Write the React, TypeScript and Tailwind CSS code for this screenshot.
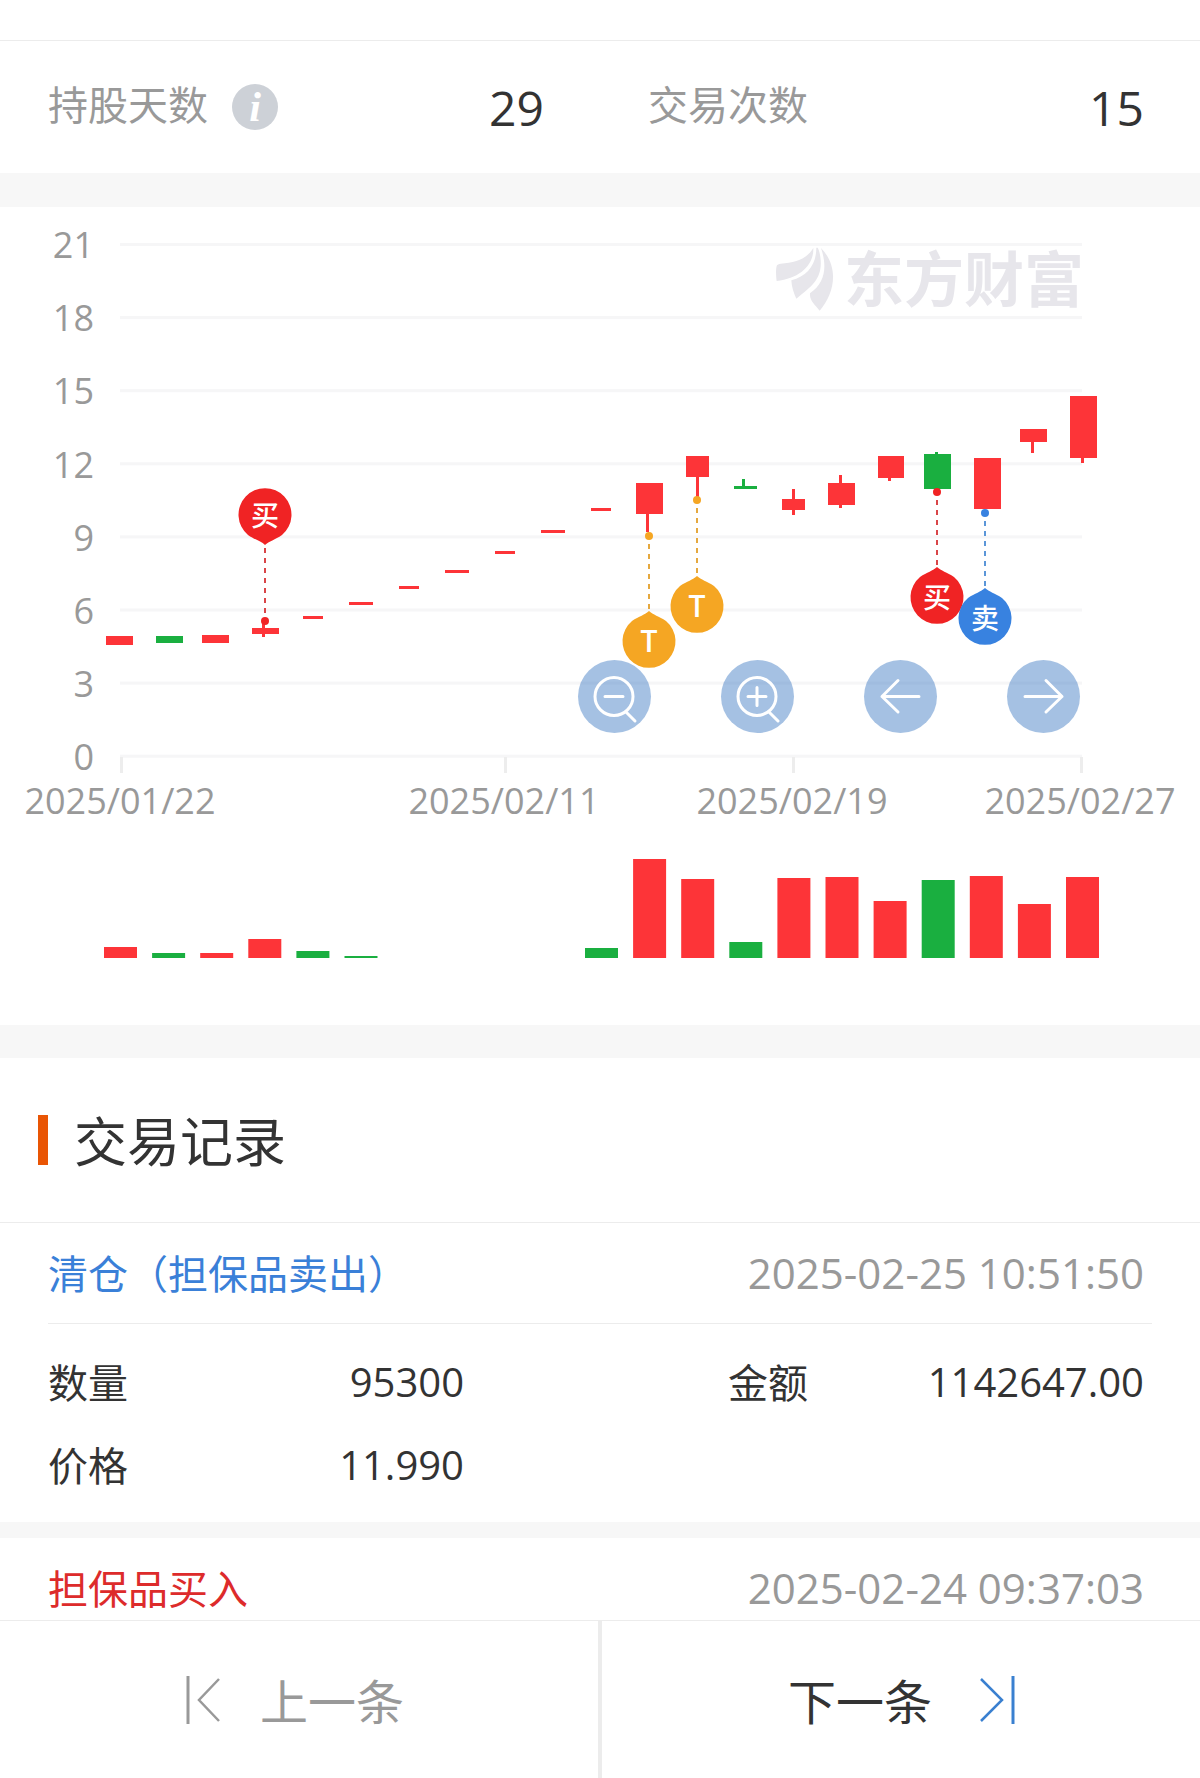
import type { ReactNode } from 'react';

const RED = '#fd3438';
const GREEN = '#1aaf40';

type Candle = {
  x: number;
  w: number;
  top: number;
  bottom: number;
  color?: string;
  wick?: [number, number, number];
};

const candles: Candle[] = [
  { x: 106, w: 27, top: 636, bottom: 645 },
  { x: 156, w: 27, top: 636, bottom: 643, color: GREEN },
  { x: 202, w: 27, top: 635, bottom: 643 },
  { x: 252, w: 27, top: 628, bottom: 634, wick: [263, 623, 637] },
  { x: 303, w: 20, top: 616, bottom: 619 },
  { x: 349, w: 24, top: 602, bottom: 605 },
  { x: 399, w: 20, top: 586, bottom: 589 },
  { x: 445, w: 24, top: 570, bottom: 573 },
  { x: 495, w: 20, top: 551, bottom: 554 },
  { x: 541, w: 24, top: 530, bottom: 533 },
  { x: 591, w: 20, top: 508, bottom: 511 },
  { x: 636, w: 27, top: 483, bottom: 514, wick: [647, 514, 532] },
  { x: 686, w: 23, top: 456, bottom: 477, wick: [697, 477, 497] },
  { x: 734, w: 23, top: 486, bottom: 489, color: GREEN, wick: [743, 479, 487] },
  { x: 782, w: 23, top: 499, bottom: 510, wick: [793, 489, 515] },
  { x: 828, w: 27, top: 483, bottom: 505, wick: [840, 475, 508] },
  { x: 878, w: 26, top: 456, bottom: 478, wick: [889, 478, 481] },
  { x: 924, w: 27, top: 454, bottom: 489, color: GREEN, wick: [936, 452, 454] },
  { x: 974, w: 27, top: 458, bottom: 509 },
  { x: 1020, w: 27, top: 429, bottom: 442, wick: [1032, 442, 453] },
  { x: 1070, w: 27, top: 396, bottom: 458, wick: [1082, 458, 463] },
];

const volumes: { i: number; top: number; color?: string }[] = [
  { i: 0, top: 947 },
  { i: 1, top: 953, color: GREEN },
  { i: 2, top: 953 },
  { i: 3, top: 939 },
  { i: 4, top: 951, color: GREEN },
  { i: 5, top: 956, color: GREEN },
  { i: 10, top: 948, color: GREEN },
  { i: 11, top: 859 },
  { i: 12, top: 879 },
  { i: 13, top: 942, color: GREEN },
  { i: 14, top: 878 },
  { i: 15, top: 877 },
  { i: 16, top: 901 },
  { i: 17, top: 880, color: GREEN },
  { i: 18, top: 876 },
  { i: 19, top: 904 },
  { i: 20, top: 877 },
];

const markers = [
  { label: '买', color: '#f02324', line: '#d94548', cx: 265, cy: 515, dot: 621, up: true },
  { label: 'T', color: '#f5a623', line: '#e5a83f', cx: 649, cy: 641, dot: 536, up: false },
  { label: 'T', color: '#f5a623', line: '#e5a83f', cx: 697, cy: 606, dot: 500, up: false },
  { label: '买', color: '#f02324', line: '#d94548', cx: 937, cy: 597, dot: 492, up: false },
  { label: '卖', color: '#3882e0', line: '#5b96d8', cx: 985, cy: 618, dot: 513, up: false },
];

const priceTicks = [21, 18, 15, 12, 9, 6, 3, 0];

const dateTicks = [
  { x: 121, label: '2025/01/22' },
  { x: 505, label: '2025/02/11' },
  { x: 793, label: '2025/02/19' },
  { x: 1081, label: '2025/02/27' },
];

function Chart() {
  return (
    <svg
      viewBox="0 207 1200 818"
      className="block h-auto w-full"
      role="img"
      aria-label="K线与成交量"
    >
      {priceTicks.map((v, k) => (
        <g key={v}>
          <rect x={120} y={243 + k * 73.1} width={962} height={3} fill="#f6f6f7" />
          <text x={94} y={258 + k * 73.2} textAnchor="end" fontSize={36} fill="#999">
            {v}
          </text>
        </g>
      ))}
      {dateTicks.map((d) => (
        <g key={d.label}>
          <rect x={d.x - 1} y={757} width={3} height={16} fill="#ededed" />
          <text x={d.x - 1} y={814} textAnchor="middle" fontSize={36} fill="#999">
            {d.label}
          </text>
        </g>
      ))}

      <g fill="#e7e6eb">
        <g transform="translate(760 230) scale(0.3333)">
          <path d="M50 108C52 103 56 102 62 101C105 98 140 88 160 54C162 105 120 145 50 153C48 140 47 120 50 108Z" />
          <path d="M169 53C169 105 142 138 94 151C95 172 101 188 109 206C158 168 186 145 182 90C181 75 178 62 173 53Z" />
          <path d="M183 54C202 110 196 158 150 190C148 212 166 225 179 242C225 190 238 110 183 54Z" />
        </g>
        <text x={844} y={302} fontSize={60} fontWeight={700}>
          东方财富
        </text>
      </g>

      {candles.map((c) => (
        <g key={c.x} fill={c.color ?? RED}>
          {c.wick && (
            <rect x={c.wick[0] - 1} y={c.wick[1]} width={3} height={c.wick[2] - c.wick[1]} />
          )}
          <rect x={c.x} y={c.top} width={c.w} height={c.bottom - c.top} />
        </g>
      ))}

      {volumes.map((v) => (
        <rect
          key={v.i}
          x={104 + v.i * 48.1}
          y={v.top}
          width={33}
          height={958 - v.top}
          fill={v.color ?? RED}
        />
      ))}

      {markers.map((m) => (
        <g key={m.cx}>
          <line
            x1={m.cx}
            x2={m.cx}
            y1={m.dot}
            y2={m.up ? m.cy + 28 : m.cy - 30}
            stroke={m.line}
            strokeWidth={2}
            strokeDasharray="5 5"
            strokeDashoffset={2}
          />
          <circle cx={m.cx} cy={m.dot} r={4} fill={m.color} />
          <g transform={`translate(${m.cx} ${m.cy})${m.up ? ' rotate(180)' : ''}`}>
            <path
              d="M0 -30C4 -26 10 -25 17 -20A26.5 26.5 0 1 1 -17 -20C-10 -25 -4 -26 0 -30Z"
              fill={m.color}
            />
          </g>
          <text
            x={m.cx}
            y={m.cy + 11}
            textAnchor="middle"
            fontSize={m.label === 'T' ? 30 : 28}
            fontWeight={m.label === 'T' ? 600 : 500}
            fill="#fff"
          >
            {m.label}
          </text>
        </g>
      ))}
    </svg>
  );
}

function RoundButton({ label, children }: { label: string; children: ReactNode }) {
  return (
    <button
      type="button"
      aria-label={label}
      className="flex size-[73px] items-center justify-center rounded-full bg-[#3775c1]/45"
    >
      <svg
        viewBox="0 0 73 73"
        className="size-full"
        fill="none"
        stroke="#fff"
        strokeWidth={3}
        strokeLinecap="round"
        strokeLinejoin="round"
      >
        {children}
      </svg>
    </button>
  );
}

function Stat({ label, value, info }: { label: string; value: string; info?: boolean }) {
  return (
    <div className="flex items-center justify-between">
      <dt className="flex items-center gap-6">
        <span className="pb-1 text-[40px] leading-12 text-[#999]">{label}</span>
        {info && (
          <button
            type="button"
            aria-label="说明"
            className="flex size-[46px] items-center justify-center rounded-full bg-[#cdd1d7] font-['Liberation_Serif',serif] text-[42px] leading-[42px] font-bold text-white italic"
          >
            i
          </button>
        )}
      </dt>
      <dd className="pt-0.5 text-5xl">{value}</dd>
    </div>
  );
}

function Field({ label, value }: { label: string; value: string }) {
  return (
    <div className="flex h-[83px] items-center justify-between">
      <dt className="pt-0.5">{label}</dt>
      <dd>{value}</dd>
    </div>
  );
}

function RecordHead({ title, time, color }: { title: string; time: string; color: string }) {
  return (
    <div className="flex h-[100px] items-center justify-between pr-2">
      <h3 className={`pt-0.5 ${color}`}>{title}</h3>
      <time className="text-[42px] text-[#999]">{time}</time>
    </div>
  );
}

export default function App() {
  return (
    <div className="flex h-screen flex-col bg-white font-['Open_Sans','Noto_Sans_CJK_SC',sans-serif] text-[40px] leading-12 text-[#333]">
      <main className="min-h-0 flex-1 overflow-hidden">
        <div className="h-10" />
        <dl className="grid h-[133px] grid-cols-2 gap-x-26 border-t border-[#ececec] pr-14 pl-12">
          <Stat label="持股天数" value="29" info />
          <Stat label="交易次数" value="15" />
        </dl>

        <div className="h-[34px] bg-[#f7f7f7]" />

        <section className="relative">
          <Chart />
          <div className="absolute top-[453px] right-[10%] flex gap-[70px]">
            <RoundButton label="缩小">
              <circle cx="36" cy="36.5" r="19" />
              <path d="M27 36.5h18M48 52l9 9" />
            </RoundButton>
            <RoundButton label="放大">
              <circle cx="36" cy="36.5" r="19" />
              <path d="M27 36.5h18M36 27.5v18M48 52l9 9" />
            </RoundButton>
            <RoundButton label="向左">
              <path d="M55 36.5H18M34 20.5L18 36.5L34 52" />
            </RoundButton>
            <RoundButton label="向右">
              <path d="M18 36.5H55M39 20.5L55 36.5L39 52" />
            </RoundButton>
          </div>
        </section>

        <div className="h-[33px] bg-[#f7f7f7]" />

        <section>
          <div className="flex h-[164px] items-center gap-[26px] pl-[38px]">
            <span className="h-[50px] w-[10px] bg-[#e95504]" />
            <h2 className="pt-1 text-[53px] leading-16">交易记录</h2>
          </div>

          <article className="border-t border-[#ececec]">
            <div className="mx-12 border-b border-[#ececec]">
              <RecordHead
                title="清仓（担保品卖出）"
                time="2025-02-25 10:51:50"
                color="text-[#3a80d8]"
              />
            </div>
            <dl className="grid grid-cols-2 gap-x-66 pt-4 pr-14 pb-4 pl-12">
              <Field label="数量" value="95300" />
              <Field label="金额" value="1142647.00" />
              <Field label="价格" value="11.990" />
            </dl>
          </article>

          <article className="border-t-16 border-[#f7f7f7]">
            <div className="mx-12">
              <RecordHead
                title="担保品买入"
                time="2025-02-24 09:37:03"
                color="text-[#dd2b2b]"
              />
            </div>
          </article>
        </section>
      </main>

      <nav className="grid h-[158px] shrink-0 grid-cols-2 border-t border-[#ececec] bg-white text-5xl">
        <button
          type="button"
          className="flex items-center justify-center gap-10 border-r-2 border-[#ececec] pr-2 text-[#999]"
        >
          <svg viewBox="0 0 34 48" className="h-12 w-[34px]" fill="none" stroke="currentColor" strokeWidth={3}>
            <path d="M2 0V48" />
            <path d="M33 3L13 24L33 45" strokeWidth={2.5} />
          </svg>
          <span className="pt-1">上一条</span>
        </button>
        <button
          type="button"
          className="flex items-center justify-center gap-12 border-l-2 border-[#ececec] pl-0.5"
        >
          <span className="pt-1">下一条</span>
          <svg viewBox="0 0 36 48" className="h-12 w-9 text-[#3a80d0]" fill="none" stroke="currentColor" strokeWidth={3}>
            <path d="M33 0V48" />
            <path d="M1 3L22 24L1 45" strokeWidth={2.5} />
          </svg>
        </button>
      </nav>
    </div>
  );
}
